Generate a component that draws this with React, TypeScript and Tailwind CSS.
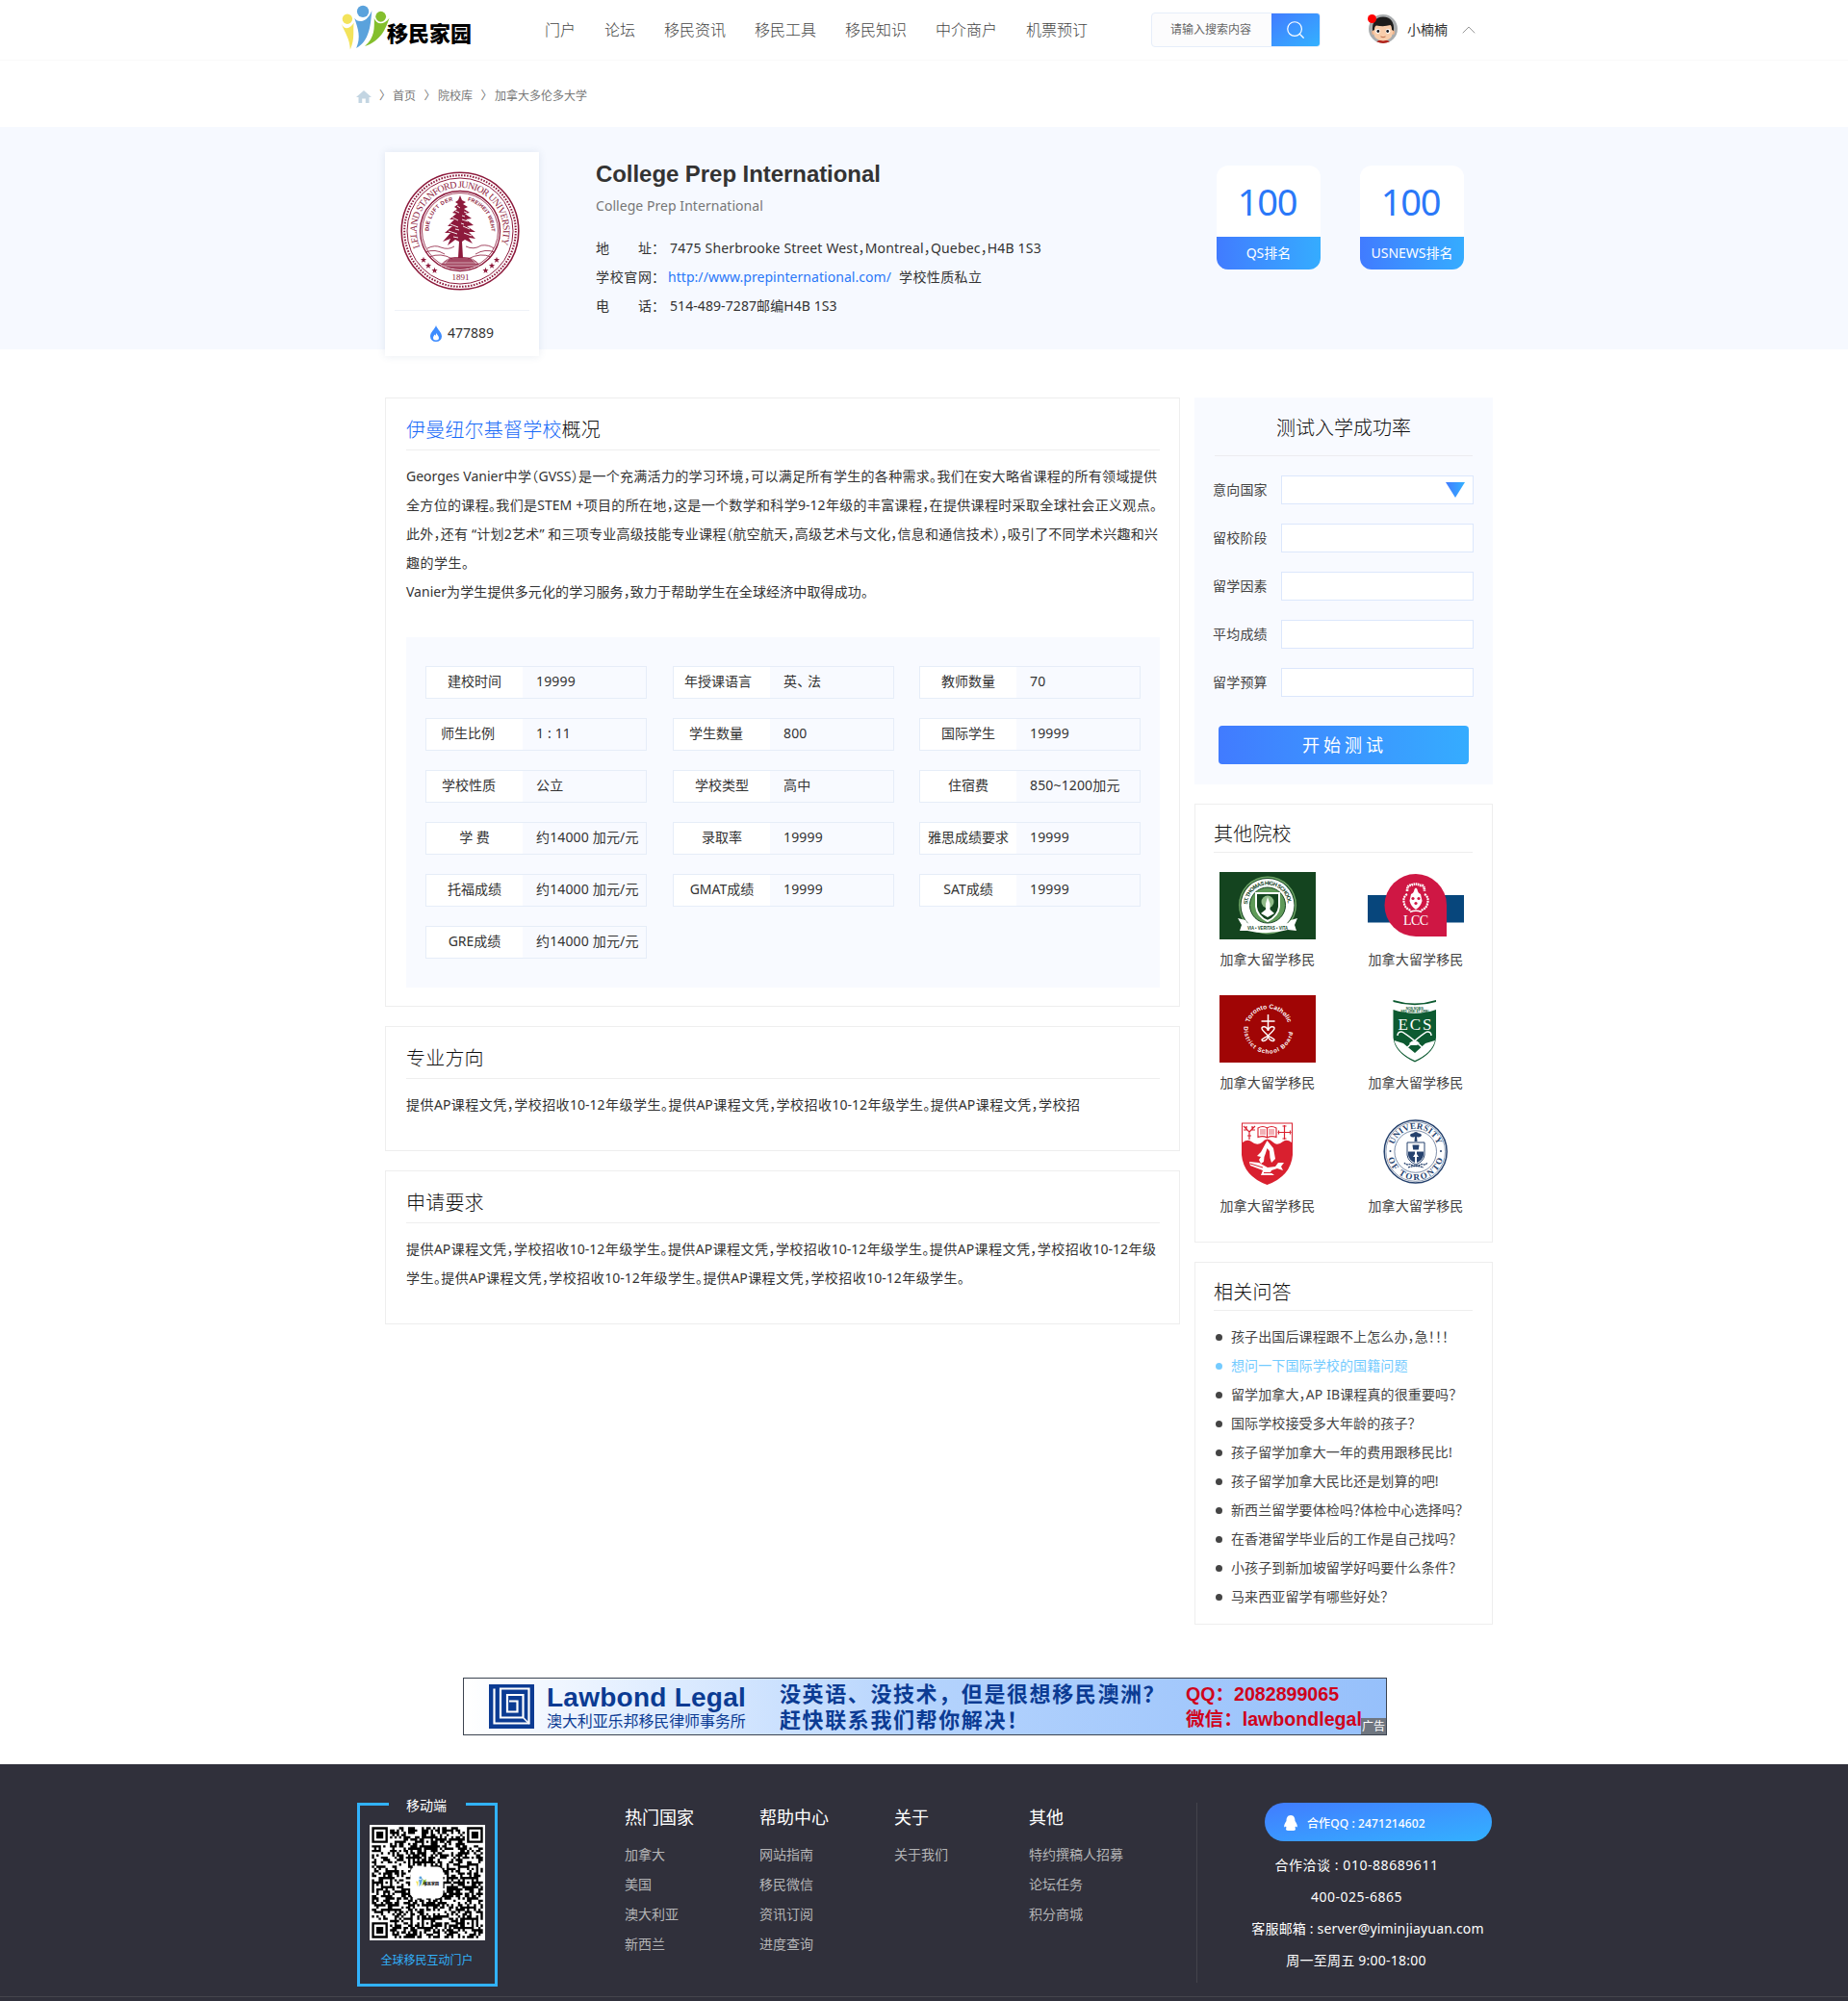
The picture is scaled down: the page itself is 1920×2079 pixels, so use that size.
import React from "react";
import { Search, ChevronUp } from "lucide-react";

/* ---------- drawing helpers ---------- */

type ArcProps = {
  id: string;
  cx: number;
  cy: number;
  r: number;
  from: number;
  to: number;
  size: number;
  fill: string;
  family?: string;
  weight?: number;
  children: string;
};

// Text on a circle; angles are degrees clockwise from the top.
function ArcText({ id, cx, cy, r, from, to, size, fill, family = "Liberation Serif", weight = 400, children }: ArcProps) {
  const pt = (a: number) => {
    const t = (a * Math.PI) / 180;
    return `${(cx + r * Math.sin(t)).toFixed(2)} ${(cy - r * Math.cos(t)).toFixed(2)}`;
  };
  const large = Math.abs(to - from) > 180 ? 1 : 0;
  const sweep = to > from ? 1 : 0;
  const len = (Math.abs(to - from) * Math.PI * r) / 180;
  return (
    <>
      <path id={id} d={`M${pt(from)} A${r} ${r} 0 ${large} ${sweep} ${pt(to)}`} fill="none" />
      <text fontSize={size} fill={fill} fontFamily={family} fontWeight={weight}>
        <textPath href={`#${id}`} textLength={len * 0.98}>
          {children}
        </textPath>
      </text>
    </>
  );
}

function Figures({ className }: { className?: string }) {
  return (
    <svg viewBox="0 0 51 48" className={className}>
      <circle cx="23" cy="7" r="6.300" fill="#5aa2dc" />
      <circle cx="6.500" cy="15" r="5.300" fill="#f3e35b" />
      <circle cx="42" cy="12.500" r="5.500" fill="#84bf2d" />
      <path d="M0 20 C4 28 10 25 13.500 19 C12 26 15 36 9.500 47.500 C9 36 4 30 0 20Z" fill="#f3e35b" />
      <path d="M14 14 C17 19 27 20 32.500 6 C31 22 30 38 16 46 C21 34 18 26 14 14Z" fill="#5aa2dc" />
      <path d="M35 14 C37 21 45 22 51 14 C47 26 42 38 25 44 C36 34 35 25 35 14Z" fill="#84bf2d" />
    </svg>
  );
}

function StanfordSeal() {
  const c = "#8d1a3c";
  const star = "M0 -3.200 L.8 -1 L3.100 -1 L1.300 .5 L2 2.800 L0 1.400 L-2 2.800 L-1.300 .5 L-3.100 -1 L-.8 -1Z";
  return (
    <svg viewBox="0 0 124 124" className="h-[124px] w-[124px]">
      <circle cx="62" cy="62" r="60.800" fill="none" stroke={c} strokeWidth="1.600" />
      <circle cx="62" cy="62" r="57.800" fill="none" stroke={c} strokeWidth="2" strokeDasharray="1.600 1.400" />
      <circle cx="62" cy="62" r="55" fill="none" stroke={c} strokeWidth="1" />
      <circle cx="62" cy="62" r="41.500" fill="none" stroke={c} strokeWidth="1.400" />
      <circle cx="62" cy="62" r="39.500" fill="none" stroke={c} strokeWidth=".8" />
      <ArcText id="st1" cx={62} cy={62} r={45} from={-112} to={112} size={10} fill={c}>LELAND STANFORD JUNIOR UNIVERSITY</ArcText>
      <ArcText id="st2" cx={62} cy={62} r={32.5} from={-90} to={-12} size={5.6} fill={c} family="Liberation Sans" weight={700}>DIE LUFT DER</ArcText>
      <ArcText id="st3" cx={62} cy={62} r={32.5} from={14} to={92} size={5.4} fill={c} family="Liberation Sans" weight={700}>FREIHEIT WEHT</ArcText>
      <path d="M28 80 Q36 76 42 79 Q50 82 56 78 M68 78 Q76 82 84 77 Q92 76 97 80 M26 84 Q36 80 46 86 M78 86 Q88 80 98 84 M30 89 Q42 84 54 91 M70 91 Q84 84 94 89" stroke={c} strokeWidth=".8" fill="none" />
      <path d="M42 97 Q50 88 58 89 L66 89 Q76 89 82 97 Q62 106 42 97Z" fill={c} opacity=".8" />
      <path d="M44 95 H80 M42 98 H82 M50 91 L46 96 M74 91 L79 96" stroke="#fff" strokeWidth=".5" />
      <path
        d="M62 25 L64 30 L68 32 L65 34 L70 37 L66 39 L72 43 L67 44 L74 49 L68 50 L76 56 L69 57 L78 63 L71 63 L78 70 L71 69 L75 75 L67 71 L64 73 L65 90 L60 90 L61 73 L57 71 L49 77 L52 70 L44 73 L52 64 L46 64 L54 57 L49 57 L56 50 L51 50 L58 44 L54 43 L59 39 L56 37 L60 34 L57 32 L60 30Z"
        fill={c}
      />
      <path d="M57 41 L61 43 M66 42 L69 43 M54 48 L60 51 M64 50 L70 52 M52 55 L60 58 M65 57 L72 60 M50 62 L59 65 M66 64 L74 67 M55 68 L60 69 M59 36 L62 38 M64 46 L67 47 M63 54 L66 55 M57 60 L61 61" stroke="#fff" strokeWidth=".9" />
      {[[24, 92], [29, 98], [35.5, 103], [100, 92], [95, 98], [88.5, 103]].map(([x, y]) => (
        <path key={`${x}`} d={star} transform={`translate(${x} ${y})`} fill={c} />
      ))}
      <text x="62.500" y="112.500" fontSize="9" textAnchor="middle" fill={c} fontFamily="Liberation Serif">1891</text>
    </svg>
  );
}

function StThomas() {
  return (
    <svg viewBox="0 0 100 70" className="h-[70px] w-[100px]">
      <rect width="100" height="70" fill="#14441f" />
      <circle cx="50" cy="34.500" r="30" fill="#6fa567" />
      <circle cx="50" cy="34.500" r="28.500" fill="#14441f" />
      <circle cx="50" cy="34.500" r="27.500" fill="#fff" />
      <circle cx="50" cy="34.500" r="18.500" fill="#5f9a58" stroke="#14441f" strokeWidth="1" />
      <ArcText id="th" cx={50} cy={34.5} r={21} from={-88} to={88} size={5.8} fill="#14441f" family="Liberation Sans" weight={700}>ST. THOMAS HIGH SCHOOL</ArcText>
      <path d="M38 22 H62 V36 Q61 46 50 51 Q39 46 38 36Z" fill="#14441f" stroke="#fff" strokeWidth="2" />
      <circle cx="50" cy="31" r="6.500" fill="#8fbb88" />
      <path d="M50 26 L52.500 33 V39 L57 43 L50 47 L43 43 L48 39 V33Z" fill="#fff" />
      <path d="M19 48 L27 50 L29 53 Q50 58 71 53 L74 50 L81 48 L78 55 L80 61 L71 60 Q50 66 29 61 L21 61 L23 55Z" fill="#fff" />
      <text x="50" y="59.800" fontSize="5" fontWeight="700" textAnchor="middle" fill="#14441f" fontFamily="Liberation Sans" textLength="42" lengthAdjust="spacingAndGlyphs">VIA • VERITAS • VITA</text>
    </svg>
  );
}

function Lcc() {
  return (
    <svg viewBox="0 0 100 70" className="h-[70px] w-[100px]">
      <rect y="24" width="100" height="28.500" fill="#07467c" />
      <path d="M50 2 A32.300 32.300 0 0 1 82 34 V67 H50 A32.300 32.300 0 0 1 50 2Z" fill="#cf1744" />
      <path d="M41 20 Q41 13 45 14 Q50 11 55 14 Q59 13 59 20" fill="none" stroke="#fff" strokeWidth="2.600" strokeDasharray="1.600 .6" />
      <path d="M45 23 Q48 22 48.500 18 Q50 15 51.500 18 Q52 22 55 23 L56.500 30 Q55 36 50 39 Q45 36 43.500 30Z" fill="#fff" />
      <path d="M41 23 Q36 26 38 33 Q39 38 45 40 M59 23 Q64 26 62 33 Q61 38 55 40" fill="none" stroke="#fff" strokeWidth="2.200" strokeDasharray="2 .7" />
      <circle cx="47" cy="27.500" r="1.600" fill="#cf1744" />
      <circle cx="53" cy="27.500" r="1.600" fill="#cf1744" />
      <circle cx="50" cy="32.500" r="1.600" fill="#cf1744" />
      <path d="M44 41.500 Q50 39 56 41.500" stroke="#fff" strokeWidth="1.600" fill="none" />
      <text x="50" y="54.500" fontSize="14" textAnchor="middle" fill="#fff" fontFamily="Liberation Serif" textLength="26">LCC</text>
    </svg>
  );
}

function TorontoCatholic() {
  return (
    <svg viewBox="0 0 100 70" className="h-[70px] w-[100px]">
      <rect width="100" height="70" fill="#a00505" />
      <ArcText id="tc1" cx={51} cy={35} r={21} from={-72} to={75} size={6.6} fill="#fff" family="Liberation Sans" weight={700}>Toronto Catholic</ArcText>
      <ArcText id="tc2" cx={51} cy={35} r={25.5} from={-84} to={-265} size={6.2} fill="#fff" family="Liberation Sans" weight={700}>District School Board</ArcText>
      <path d="M50.500 20 V37 M43.500 27 H57.500" stroke="#fff" strokeWidth="1.500" fill="none" />
      <path d="M50.500 42 C46 38 42 34 45 33 C48 32 50.500 35 50.500 37 C50.500 35 53 32 56 33 C59 34 55 38 50.500 42 C46 45 42 46 45 47.500 C48 48 50.500 45 50.500 42 C50.500 45 53 48 56 47.500 C59 46 55 45 50.500 42Z" stroke="#fff" strokeWidth="1.400" fill="none" />
    </svg>
  );
}

function Ecs() {
  const g = "#0d5a31";
  return (
    <svg viewBox="0 0 100 70" className="h-[70px] w-[100px]">
      <path d="M26.500 5.500 Q49 12.500 71 5.500 V44 Q70 60 49 69.500 Q28 60 26.500 44Z" fill="#fff" />
      <path d="M26.500 5 Q49 12 71 5 V7 Q49 13.500 26.500 7Z" fill={g} />
      <text x="48.800" y="14.500" fontSize="3.200" fontWeight="700" textAnchor="middle" fill={g} fontFamily="Liberation Sans">NON NOBIS</text>
      <text x="48.800" y="18" fontSize="3.200" fontWeight="700" textAnchor="middle" fill={g} fontFamily="Liberation Sans">SED URBI ET ORBI</text>
      <path d="M26.500 15 Q49 22.500 71 15 V44 Q70 60 49 69.500 Q28 60 26.500 44Z" fill={g} />
      <text x="49" y="35.500" fontSize="17" textAnchor="middle" fill="#fff" fontFamily="Liberation Serif" textLength="35">ECS</text>
      <path d="M31 42 Q31 38 35 38 Q38 38 60 57 M66 42 Q66 38 62 38 Q59 38 38 57" fill="none" stroke="#fff" strokeWidth="1.500" />
      <path d="M43 50 Q49 44 54 50 L51 52 H45Z" fill="#fff" />
      <path d="M27.500 47 L37 50 L49 60 L60 50 L70 47 Q67 60 49 68 Q31 60 27.500 47Z" fill="#fff" />
    </svg>
  );
}

function RedShield() {
  const r = "#d9202f";
  return (
    <svg viewBox="0 0 100 70" className="h-[70px] w-[100px]">
      <path d="M23 4.500 H76 V38 Q74 60 49.500 69 Q25 60 23 38Z" fill={r} />
      <path d="M24 5.500 H75 V25 Q70 21 66 24 Q60 29 56 25 Q49.500 18 44 25 Q39 29 33 24 Q29 21 24 25Z" fill="#fff" />
      <path d="M25 8 L31 14 V22 M37 8 L31 14 M28 8 V12 L25 12 M34 8 V12 H37 M29 18 H33" stroke={r} strokeWidth="1.200" fill="none" />
      <path d="M40 10 Q45 7 49.500 10 Q54 7 59 10 V19.500 Q54 17.500 49.500 20 Q45 17.500 40 19.500Z M49.500 10 V20" fill="#fff" stroke={r} strokeWidth="1.100" />
      <path d="M42 12 H48 M42 14 H48 M42 16 H48 M51 12 H57 M51 14 H57 M51 16 H57" stroke={r} strokeWidth=".7" />
      <path d="M67.500 7 V22 M60.500 14.500 H74.500 M65.500 8 H69.500 M65.500 21 H69.500 M61.500 12.500 V16.500 M73.500 12.500 V16.500" stroke={r} strokeWidth="1.200" />
      <path d="M49.500 23 L56 31 L58 42 L54 46 L52.500 41 L52 34 L49.500 31 L48 36 L46.500 40 L46 45 L43 47 L41 43 L43 40 L39 39 L43 35Z" fill="#fff" />
      <path d="M31 45 L41 46 L50 51 L58 50 L61 46 L67 46 L64 50 L66 54 L60 52 L54 54 L53 56 L57 59 H43 L45 54 L32 49Z" fill="#fff" />
      <path d="M32 47 L45 51 M46 56.500 H54" stroke={r} strokeWidth="1" />
    </svg>
  );
}

function UofT() {
  const b = "#26426e";
  return (
    <svg viewBox="0 0 100 70" className="h-[70px] w-[100px]">
      <circle cx="49.700" cy="34.500" r="32.500" fill="#fff" stroke={b} strokeWidth="1.500" />
      <circle cx="49.700" cy="34.500" r="30.800" fill="none" stroke={b} strokeWidth=".5" />
      <circle cx="49.700" cy="34.500" r="21.800" fill="none" stroke={b} strokeWidth=".6" />
      <ArcText id="ut1" cx={49.7} cy={34.5} r={23.6} from={-72} to={74} size={9} fill={b} weight={700}>UNIVERSITY</ArcText>
      <ArcText id="ut2" cx={49.7} cy={34.5} r={29.4} from={-104} to={-257} size={9} fill={b} weight={700}>OF TORONTO</ArcText>
      <circle cx="23.500" cy="34" r="1" fill={b} />
      <circle cx="76" cy="34" r="1" fill={b} />
      <path d="M44 18 Q44 15 47 15.500 Q50 12.500 53 15.500 Q56 15 56 18 Q53 20.500 51 19 L51.500 24 H48.500 L49 19 Q46 20.500 44 18Z" fill={b} />
      <path d="M41 25 H59 V38 Q58 45 50 48 Q42 45 41 38Z" fill="#fff" stroke={b} strokeWidth="1" />
      <path d="M42 34.500 H49 V37 L47 40 H49 V46 Q42.500 43 42 38Z M51 34.500 H58 V38 Q57.500 43 51 46 V40 H53 L51 37Z" fill={b} />
      <path d="M46.500 27.500 H53.500 L52.800 32.500 H47.200Z" fill={b} />
      <path d="M38 46 Q40 49 44 47.500 Q50 51 56 47.500 Q60 49 62 46 M42 51 Q50 48 58 51" fill="none" stroke={b} strokeWidth="1.300" strokeDasharray="2 .6" />
    </svg>
  );
}

// 49×49 module code with finder and alignment marks and a cleared centre.
const QR_N = 49;
const QR_PATH = (() => {
  let seed = 20247;
  const rnd = () => {
    seed = (seed * 1103515245 + 12345) % 2147483648;
    return seed / 2147483648;
  };
  const ring = (x: number, y: number, cx: number, cy: number, radius: number) => {
    const d = Math.max(Math.abs(x - cx), Math.abs(y - cy));
    if (d > radius) return null;
    if (radius === 4) return d === 3 || d <= 1;
    return d !== 1;
  };
  let d = "";
  for (let y = 0; y < QR_N; y++) {
    for (let x = 0; x < QR_N; x++) {
      let on = rnd() > 0.49;
      for (const [cx, cy] of [[6, 24], [24, 6], [42, 24], [24, 42], [42, 42]]) {
        const v = ring(x, y, cx, cy, 2);
        if (v !== null) on = v;
      }
      for (const [cx, cy] of [[3, 3], [45, 3], [3, 45]]) {
        const v = ring(x, y, cx, cy, 4);
        if (v !== null) on = v;
      }
      if (on) d += `M${x} ${y}h1.020v1.020h-1.020z`;
    }
  }
  return d;
})();

function QrCode() {
  return (
    <svg viewBox="-1 -1 51 51" className="h-[120px] w-[120px] bg-white">
      <path d={QR_PATH} fill="#000" />
      <rect x="17" y="17.500" width="14.500" height="14" rx="2.500" fill="#fff" />
      <svg x="19.200" y="21.500" width="5" height="5" viewBox="0 0 51 48">
        <circle cx="23" cy="7" r="6.300" fill="#5aa2dc" />
        <path d="M0 16 C4 28 10 25 13.500 19 C12 26 15 36 9.500 47.500 C9 36 4 30 0 16Z" fill="#f3e35b" />
        <path d="M14 14 C17 19 27 20 32.500 6 C31 22 30 38 16 46 C21 34 18 26 14 14Z" fill="#5aa2dc" />
        <path d="M35 10 C37 21 45 22 51 10 C47 26 42 38 25 44 C36 34 35 25 35 10Z" fill="#84bf2d" />
      </svg>
      <text x="22.800" y="25.700" fontSize="1.700" fontWeight="700" fontFamily="'Noto Sans CJK SC'">移民家园</text>
    </svg>
  );
}

function Avatar() {
  return (
    <svg viewBox="0 0 30 30" className="h-[30px] w-[30px]">
      <clipPath id="face"><circle cx="15" cy="15" r="15" /></clipPath>
      <g clipPath="url(#face)">
        <rect width="30" height="30" fill="#a9acae" />
        <path d="M7 30 Q9 26 15 26.500 Q21 26 23 30Z" fill="#b3241c" />
        <ellipse cx="5" cy="18.500" rx="1.800" ry="2.500" fill="#efb48c" />
        <ellipse cx="25.200" cy="18.500" rx="1.800" ry="2.500" fill="#efb48c" />
        <path d="M5 15 Q5 7 15 7 Q25 7 25 15 V19 Q24 27 15 27.500 Q6 27 5 19Z" fill="#f8cdab" />
        <path d="M4 17 Q3 3 15 2.500 Q27 3 26 17 L24 16 Q24 12 22.500 11 Q16 13 8 11.500 Q6 12 6 16Z" fill="#1d1c1c" />
        <circle cx="9.500" cy="17.500" r="2.400" fill="#fff" />
        <circle cx="20" cy="17.500" r="2.400" fill="#fff" />
        <circle cx="9.800" cy="17.500" r="1.400" fill="#16161c" />
        <circle cx="19.700" cy="17.500" r="1.400" fill="#16161c" />
        <path d="M12.500 23 Q15 24.500 17.500 23" stroke="#b5623f" strokeWidth=".9" fill="none" />
      </g>
    </svg>
  );
}

/* ---------- data ---------- */

const NAV = ["门户", "论坛", "移民资讯", "移民工具", "移民知识", "中介商户", "机票预订"];

const FACTS: { label: string; value: string; pad?: string }[] = [
  { label: "建校时间", value: "19999" },
  { label: "年授课语言", value: "英、 法", pad: "pr-2" },
  { label: "教师数量", value: "70" },
  { label: "师生比例", value: "1 : 11", pad: "pr-[14px]" },
  { label: "学生数量", value: "800", pad: "pr-3" },
  { label: "国际学生", value: "19999" },
  { label: "学校性质", value: "公立", pad: "pr-3" },
  { label: "学校类型", value: "高中" },
  { label: "住宿费", value: "850~1200加元" },
  { label: "学 费", value: "约14000 加元/元" },
  { label: "录取率", value: "19999" },
  { label: "雅思成绩要求", value: "19999" },
  { label: "托福成绩", value: "约14000 加元/元" },
  { label: "GMAT成绩", value: "19999" },
  { label: "SAT成绩", value: "19999" },
  { label: "GRE成绩", value: "约14000 加元/元" },
];

const FIELDS = ["意向国家", "留校阶段", "留学因素", "平均成绩", "留学预算"];
const SCHOOLS = [StThomas, Lcc, TorontoCatholic, Ecs, RedShield, UofT];

const QUESTIONS = [
  "孩子出国后课程跟不上怎么办，急！！！",
  "想问一下国际学校的国籍问题",
  "留学加拿大，AP IB课程真的很重要吗？",
  "国际学校接受多大年龄的孩子？",
  "孩子留学加拿大一年的费用跟移民比!",
  "孩子留学加拿大民比还是划算的吧!",
  "新西兰留学要体检吗？体检中心选择吗？",
  "在香港留学毕业后的工作是自己找吗？",
  "小孩子到新加坡留学好吗要什么条件？",
  "马来西亚留学有哪些好处？",
];

const FOOT_COLS = [
  { title: "热门国家", items: ["加拿大", "美国", "澳大利亚", "新西兰"] },
  { title: "帮助中心", items: ["网站指南", "移民微信", "资讯订阅", "进度查询"] },
  { title: "关于", items: ["关于我们"] },
  { title: "其他", items: ["特约撰稿人招募", "论坛任务", "积分商城"] },
];

/* ---------- sections ---------- */

function Header() {
  return (
    <header className="flex h-[63px] items-center border-b border-[#fafafa] pl-[354px]">
      <div className="flex h-[62px] w-[137px] items-start">
        <Figures className="mt-[5px] h-[47px] w-[51px] shrink-0" />
        <span className="-ml-[3px] mt-[19px] text-[22px] leading-[30px] font-black whitespace-nowrap text-black">移民家园</span>
      </div>
      <nav className="ml-[75px] flex gap-[30px] text-base leading-6 font-light text-[#444]">
        {NAV.map((n) => (
          <a key={n}>{n}</a>
        ))}
      </nav>
      <div className="ml-[66px] flex h-9 w-[176px] overflow-hidden rounded border border-[#e6eefa] bg-[#fcfcfd]">
        <span className="w-[124px] pl-[19px] text-xs leading-[34px] text-[#666]">请输入搜索内容</span>
        <button className="flex flex-1 items-center justify-center bg-linear-to-br from-[#417bff] to-[#33b1ff]">
          <Search className="h-[22px] w-[22px] text-white" strokeWidth={1.3} />
        </button>
      </div>
      <div className="relative ml-[50px] -mt-[2px]">
        <Avatar />
        <span className="absolute top-0 -left-px h-[9px] w-[9px] rounded-full bg-[#f00]" />
      </div>
      <span className="ml-[10px] text-sm text-[#333]">小楠楠</span>
      <ChevronUp className="ml-[9px] h-6 w-[26px] text-[#999]" strokeWidth={1} />
    </header>
  );
}

function Crumbs() {
  return (
    <div className="flex h-[69px] items-center pt-1 pl-[370px] text-xs text-[#777]">
      <svg viewBox="0 0 16 13" className="mt-px h-[13px] w-4">
        <path d="M8 0 L16 7 H13.500 V13 H9.800 V8.500 H6.200 V13 H2.500 V7 H0Z" fill="#c3d5e2" />
      </svg>
      <span className="w-[22px] text-center">〉</span>
      <span>首页</span>
      <span className="w-[23px] text-center">〉</span>
      <span>院校库</span>
      <span className="w-[23px] text-center">〉</span>
      <span>加拿大多伦多大学</span>
    </div>
  );
}

function InfoLabel({ chars }: { chars: string[] }) {
  return (
    <>
      <span className="flex w-[58px] justify-between">
        {chars.map((c) => (
          <span key={c}>{c}</span>
        ))}
      </span>
      <span className="w-[19px]">：</span>
    </>
  );
}

function Rank({ label }: { label: string }) {
  return (
    <div className="h-[108px] w-[108px] overflow-hidden rounded-xl bg-white text-center">
      <div className="h-[74px] pr-[3px] text-[38px] leading-[75px] tracking-[-1.200px] text-[#2a78f8]">100</div>
      <div className="h-[34px] bg-linear-to-r from-[#417bff] to-[#35acff] text-sm leading-[34px] text-white">{label}</div>
    </div>
  );
}

function Banner() {
  return (
    <section className="flex h-[231px] items-start bg-[#f6f9ff] pl-[400px]">
      <div className="mt-[26px] flex h-[212px] w-[160px] flex-col items-center bg-white shadow-[0_0_8px_rgba(60,90,140,0.12)]">
        <div className="mt-5 mr-[4px]">
          <StanfordSeal />
        </div>
        <div className="mt-5 h-px w-[140px] bg-[#eff2f8]" />
        <div className="mt-[13px] flex items-center gap-[6px] leading-5">
          <svg viewBox="0 0 12 17" className="h-[17px] w-3">
            <path d="M6 0 C7 4 12 7 12 11.500 A6 5.500 0 0 1 0 11.500 C0 7 5 4 6 0Z" fill="#3d8cff" />
            <path d="M6.300 8 C7 10 9 11 9 13 A3 2.500 0 0 1 3 13 C3 11.500 4 11 4.300 9.500 L5.500 10.800Z" fill="#fff" />
          </svg>
          <span>477889</span>
        </div>
      </div>
      <div className="ml-[59px] w-[645px]">
        <h1 className="mt-[34px] font-['Liberation_Sans',sans-serif] text-2xl leading-[30px] font-bold tracking-[-0.060px] text-[#333]">College Prep International</h1>
        <div className="mt-2 leading-5 tracking-[0.050px] text-[#777]">College Prep International</div>
        <div className="mt-[19px] leading-[30px]">
          <div className="flex">
            <InfoLabel chars={["地", "址"]} />
            <span className="tracking-[0.170px]">7475 Sherbrooke Street West，Montreal，Quebec，H4B 1S3</span>
          </div>
          <div className="flex">
            <InfoLabel chars={["学", "校", "官", "网"]} />
            <span className="-ml-[2px] tracking-[0.050px] text-[#2a78f8]">http://www.prepinternational.com/</span>
            <span className="ml-2 tracking-[0.400px]">学校性质私立</span>
          </div>
          <div className="flex">
            <InfoLabel chars={["电", "话"]} />
            <span className="tracking-[0.080px]">514-489-7287邮编H4B 1S3</span>
          </div>
        </div>
      </div>
      <div className="mt-10 flex gap-[41px]">
        <Rank label="QS排名" />
        <Rank label="USNEWS排名" />
      </div>
    </section>
  );
}

function Card({ title, className, children }: { title: React.ReactNode; className: string; children: React.ReactNode }) {
  return (
    <section className={`border border-[#eee] pr-5 pl-[21px] ${className}`}>
      <h2 className="h-[54px] border-b border-[#eee] pt-[18px] text-xl leading-[30px] font-light tracking-[0.200px] text-[#111]">{title}</h2>
      <div className="mt-3 leading-[30px]">{children}</div>
    </section>
  );
}

function Line({ className, children }: { className: string; children: React.ReactNode }) {
  return <span className={`block h-[30px] whitespace-nowrap [text-align-last:justify] ${className}`}>{children}</span>;
}

function Overview() {
  return (
    <Card
      className="h-[633px]"
      title={
        <>
          <span className="text-[#1769f8]">伊曼纽尔基督学校</span>概况
        </>
      }
    >
      <p>
        <Line className="w-[780px]">Georges Vanier中学（GVSS）是一个充满活力的学习环境，可以满足所有学生的各种需求。我们在安大略省课程的所有领域提供</Line>
        <Line className="w-[780px]">全方位的课程。我们是STEM +项目的所在地，这是一个数学和科学9-12年级的丰富课程，在提供课程时采取全球社会正义观点。</Line>
        <Line className="w-[781px]">此外，还有 “计划2艺术” 和三项专业高级技能专业课程（航空航天，高级艺术与文化，信息和通信技术），吸引了不同学术兴趣和兴</Line>
        <Line className="w-[65px]">趣的学生。</Line>
      </p>
      <p>
        <Line className="w-[480px]">Vanier为学生提供多元化的学习服务，致力于帮助学生在全球经济中取得成功。</Line>
      </p>
      <div className="mt-8 grid h-[364px] auto-rows-[54px] grid-cols-[257px_256px_230px] bg-[#f8faff] pt-[30px] pl-5">
        {FACTS.map((f) => (
          <div key={f.label} className="flex h-[34px] w-[230px] border border-[#e6edf8] leading-[30px]">
            <span className={`w-[100px] bg-white text-center whitespace-nowrap ${f.pad ?? ""}`}>{f.label}</span>
            <span className="pl-[14px] tracking-[0.150px] whitespace-nowrap">{f.value}</span>
          </div>
        ))}
      </div>
    </Card>
  );
}

function TestPanel() {
  return (
    <section className="h-[402px] bg-[#f8faff] px-5">
      <h2 className="ml-px h-[61px] w-[268px] border-b border-[#ececf0] pt-[17px] text-center text-xl leading-[30px] font-light text-[#111]">测试入学成功率</h2>
      <div className="mt-5 flex flex-col gap-5">
        {FIELDS.map((f, i) => (
          <label key={f} className="flex h-[30px] items-center text-[#444]">
            <span className="-ml-px w-[71px] pb-px tracking-[0.200px]">{f}</span>
            <span className="flex h-[30px] w-[200px] items-center justify-end border border-[#dce7fc] bg-white pr-2">
              {i === 0 && (
                <svg viewBox="0 0 20 16" className="h-4 w-5">
                  <defs>
                    <linearGradient id="tri">
                      <stop offset="0" stopColor="#417bff" />
                      <stop offset="1" stopColor="#33b1ff" />
                    </linearGradient>
                  </defs>
                  <path d="M0 0 H20 L10 16Z" fill="url(#tri)" />
                </svg>
              )}
            </span>
          </label>
        ))}
      </div>
      <button className="mt-[30px] ml-[5px] block h-10 w-[260px] rounded bg-linear-to-r from-[#417bff] to-[#35acff] pl-[2px] text-lg tracking-[4px] text-white">开始测试</button>
    </section>
  );
}

function SideTitle({ children }: { children: string }) {
  return <h2 className="-ml-px h-[50px] w-[269px] border-b border-[#eee] pt-4 text-xl leading-[30px] font-light tracking-[0.200px] text-[#111]">{children}</h2>;
}

function OtherSchools() {
  return (
    <section className="mt-5 h-[456px] border border-[#eee] px-5">
      <SideTitle>其他院校</SideTitle>
      <div className="mt-5 ml-[5px] grid auto-rows-[128px] grid-cols-[154px_100px]">
        {SCHOOLS.map((Logo, i) => (
          <div key={i} className="flex w-[100px] flex-col items-center">
            <Logo />
            <span className="mt-[6px] leading-[30px] tracking-[0.150px] whitespace-nowrap text-[#444]">加拿大留学移民</span>
          </div>
        ))}
      </div>
    </section>
  );
}

function Questions() {
  return (
    <section className="mt-5 h-[377px] border border-[#eee] px-5">
      <SideTitle>相关问答</SideTitle>
      <ul className="mt-3 leading-[30px] tracking-[0.120px]">
        {QUESTIONS.map((q, i) => (
          <li key={q} className={`flex items-center whitespace-nowrap ${i === 1 ? "text-[#74cbff]" : "text-[#444]"}`}>
            <span className="mr-[9px] ml-px h-[7px] w-[7px] rounded-full bg-current" />
            {q}
          </li>
        ))}
      </ul>
    </section>
  );
}

function Ad() {
  return (
    <div className="relative mt-[55px] ml-[481px] flex h-[60px] w-[960px] items-center border border-[#3c4450] bg-linear-to-r from-white via-[#b4d3fd] via-50% to-[#96c0fb] text-[#0b3b93]">
      <svg viewBox="0 0 47 46" className="ml-[26px] h-[46px] w-[47px]">
        <rect width="47" height="46" fill="#0b3b93" />
        <path d="M5.500 4.500 V40.500 H41.500 V4.500 H12 V34.500 H35.500 V11 H19 V28.500 H29.500 V17.500 H21" fill="none" stroke="#fff" strokeWidth="2.200" />
        <path d="M36 35 L42 41" stroke="#fff" strokeWidth="1.500" />
      </svg>
      <div className="ml-[13px] flex w-[242px] flex-col">
        <span className="font-['Liberation_Sans',sans-serif] text-[28px] leading-[32px] font-bold tracking-[0.250px] whitespace-nowrap">Lawbond Legal</span>
        <span className="-mt-[2px] text-base leading-[20px] tracking-[-0.100px] whitespace-nowrap">澳大利亚乐邦移民律师事务所</span>
      </div>
      <div className="w-[422px] text-[22px] leading-[27px] font-bold tracking-[1.600px] whitespace-nowrap [font-feature-settings:normal]">
        <div>没英语、没技术，但是很想移民澳洲？</div>
        <div>赶快联系我们帮你解决！</div>
      </div>
      <div className="font-['Liberation_Sans','Noto_Sans_CJK_SC',sans-serif] text-[19.600px] leading-[26px] font-bold whitespace-nowrap text-[#d0021b] [font-feature-settings:normal]">
        <div>QQ：2082899065</div>
        <div>微信：lawbondlegal</div>
      </div>
      <span className="absolute right-0 bottom-0 bg-[#6f7680] px-px text-xs leading-[17px] text-white">广告</span>
    </div>
  );
}

function Footer() {
  return (
    <footer className="mt-[30px] h-[246px] bg-[#30303b] text-white">
      <div className="flex h-[242px] items-start border-b border-[#45454d] pl-[371px]">
        <div className="relative mt-10 flex h-[191px] w-[146px] flex-col items-center border-[3px] border-[#31b2fc] pt-5">
          <span className="absolute -top-[15px] left-[30px] w-20 bg-[#30303b] pr-[2px] text-center leading-[30px]">移动端</span>
          <QrCode />
          <span className="mt-[6px] pr-px text-xs leading-[30px] text-[#31b2fc]">全球移民互动门户</span>
        </div>
        <div className="mt-10 ml-[132px] flex h-[187px] w-[595px] border-r border-[#44444c]">
          {FOOT_COLS.map((c) => (
            <div key={c.title} className="w-[140px]">
              <div className="-mt-px text-lg leading-8">{c.title}</div>
              <ul className="mt-[7px] leading-[31px] text-[#b4b4b6]">
                {c.items.map((t) => (
                  <li key={t}>{t}</li>
                ))}
              </ul>
            </div>
          ))}
        </div>
        <div className="mt-10 ml-[47px] flex w-[260px] flex-col items-center">
          <div className="ml-[22px] flex h-10 w-[236px] items-center rounded-[20px] bg-linear-to-br from-[#417bff] to-[#33b1ff] pt-[3px] pl-5 text-xs font-medium tracking-[0.100px]">
            <svg viewBox="0 0 14 16" className="mr-[10px] mb-[2px] h-4 w-[14px]">
              <path d="M7 0 C10.500 0 11.500 3 11.500 6 C13 8 14.500 11 13.500 12.500 L12 11.500 L11.500 13 Q13 15.500 10 16 H4 Q1 15.500 2.500 13 L2 11.500 L.5 12.500 C-.5 11 1 8 2.500 6 C2.500 3 3.500 0 7 0Z" fill="#fff" />
            </svg>
            合作QQ : 2471214602
          </div>
          <div className="mt-2 flex flex-col items-center leading-[33px]">
            <span className="mr-[23px] tracking-[0.550px]">合作洽谈 : 010-88689611</span>
            <span className="mr-[23px] tracking-[0.500px]">400-025-6865</span>
            <span className="tracking-[0.170px]">客服邮箱 : server@yiminjiayuan.com</span>
            <span className="mr-[24px] tracking-[0.250px]">周一至周五 9:00-18:00</span>
          </div>
        </div>
      </div>
    </footer>
  );
}

export default function App() {
  return (
    <div
      lang="zh-CN"
      className="h-[2079px] w-[1920px] overflow-hidden bg-white font-['Noto_Sans','Noto_Sans_CJK_SC',sans-serif] text-sm text-[#333] [font-feature-settings:'halt']"
    >
      <Header />
      <Crumbs />
      <Banner />
      <main className="mt-[50px] flex gap-[15px] pl-[400px]">
        <div className="flex w-[826px] flex-col gap-5">
          <Overview />
          <Card title="专业方向" className="h-[130px]">
            <Line className="w-[700px]">提供AP课程文凭，学校招收10-12年级学生。提供AP课程文凭，学校招收10-12年级学生。提供AP课程文凭，学校招</Line>
          </Card>
          <Card title="申请要求" className="h-[160px]">
            <Line className="w-[779px]">提供AP课程文凭，学校招收10-12年级学生。提供AP课程文凭，学校招收10-12年级学生。提供AP课程文凭，学校招收10-12年级</Line>
            <Line className="w-[580px]">学生。提供AP课程文凭，学校招收10-12年级学生。提供AP课程文凭，学校招收10-12年级学生。</Line>
          </Card>
        </div>
        <aside className="w-[310px]">
          <TestPanel />
          <OtherSchools />
          <Questions />
        </aside>
      </main>
      <Ad />
      <Footer />
    </div>
  );
}
